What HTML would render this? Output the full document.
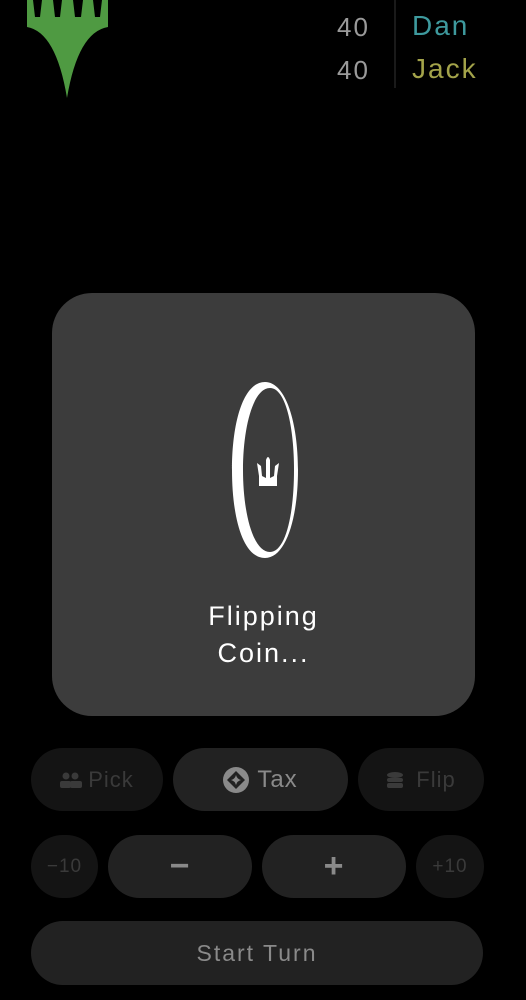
<!DOCTYPE html>
<html><head><style>
body{margin:0;width:526px;height:1000px;background:#000;position:relative;overflow:hidden;font-family:"Liberation Sans",sans-serif;}
.a{position:absolute;}
.btn{position:absolute;border-radius:32px;display:flex;align-items:center;justify-content:center;letter-spacing:1px;}
.dim{background:#141414;color:#3a3a3a;}
.mid{background:#222;color:#8a8a8a;}
</style></head><body>
<svg class="a" style="left:26px;top:0" width="84" height="100" viewBox="0 0 84 100">
<path d="M1 0 L1 27 Q30 32 41 98 Q52 32 82 27 L82 0 L76 0 L74 17 L69 17 L67 0 L57 0 L55 17 L49 17 L47 0 L36 0 L34 17 L29 17 L27 0 L16 0 L14 17 L9 17 L7 0Z" fill="#4f9a42"/>
</svg>
<div class="a" style="left:337px;top:6px;font-size:26px;color:#9a9a9a;letter-spacing:2px;line-height:43px">40<br>40</div>
<div class="a" style="left:394px;top:0;width:2px;height:88px;background:#1a1a1a"></div>
<div class="a" style="left:412px;top:4px;font-size:28px;letter-spacing:2px;line-height:43px"><span style="color:#3e9a9e">Dan</span><br><span style="color:#a3a34a">Jack</span></div>
<div class="a" style="left:52px;top:293px;width:423px;height:423px;background:#3c3c3c;border-radius:40px"></div>
<svg class="a" style="left:228px;top:378px" width="74" height="184" viewBox="0 0 74 184">
<path d="M37 4 C15 4 4 45 4 92 C4 140 15 180 37 180 C58 180 70 140 70 92 C70 45 58 4 37 4Z M42 10 C58 10 66 50 66 92 C66 135 58 174 42 174 C25 174 15 135 15 92 C15 50 25 10 42 10Z" fill="#fff" fill-rule="evenodd"/>
<path d="M29 85 L33 88 L34 98 L38 100 L38 82 Q40 76 42 82 L42 100 L46 98 L47 88 L51 85 L49 98 L49 108 L31 108 L31 98Z" fill="#fff"/>
</svg>
<div class="a" style="left:52px;top:598px;width:423px;text-align:center;color:#fff;font-size:27px;letter-spacing:2px;line-height:37px">Flipping<br>Coin...</div>
<div class="btn dim" style="left:31px;top:748px;width:132px;height:63px;font-size:22px">
<svg width="22" height="16" viewBox="0 0 22 16" style="margin-right:6px"><circle cx="6" cy="4" r="3.5" fill="#3a3a3a"/><circle cx="15" cy="4" r="3.5" fill="#3a3a3a"/><rect x="0" y="9" width="11" height="7" rx="2" fill="#3a3a3a"/><rect x="10" y="9" width="12" height="7" rx="2" fill="#3a3a3a"/></svg>Pick</div>
<div class="btn mid" style="left:173px;top:748px;width:175px;height:63px;font-size:24px">
<svg width="26" height="26" viewBox="0 0 26 26" style="margin-right:8px"><circle cx="13" cy="13" r="13" fill="#8a8a8a"/><path d="M13 4 L22 13 L13 22 L4 13Z M13 8 Q14 12 18 13 Q14 14 13 18 Q12 14 8 13 Q12 12 13 8Z" fill="#222" fill-rule="evenodd"/></svg>Tax</div>
<div class="btn dim" style="left:358px;top:748px;width:126px;height:63px;font-size:22px">
<svg width="20" height="18" viewBox="0 0 20 18" style="margin-right:10px"><ellipse cx="9" cy="4" rx="8" ry="3" fill="#3a3a3a"/><rect x="1" y="7" width="16" height="4" rx="2" fill="#3a3a3a"/><rect x="1" y="12" width="16" height="5" rx="2" fill="#3a3a3a"/></svg>Flip</div>
<div class="btn dim" style="left:31px;top:835px;width:67px;height:63px;font-size:19px">−10</div>
<div class="btn mid" style="left:108px;top:835px;width:144px;height:63px;font-size:34px;font-weight:bold">−</div>
<div class="btn mid" style="left:262px;top:835px;width:144px;height:63px;font-size:34px;font-weight:bold">+</div>
<div class="btn dim" style="left:416px;top:835px;width:68px;height:63px;font-size:19px">+10</div>
<div class="btn mid" style="left:31px;top:921px;width:452px;height:64px;font-size:23px;letter-spacing:2px">Start Turn</div>
</body></html>
